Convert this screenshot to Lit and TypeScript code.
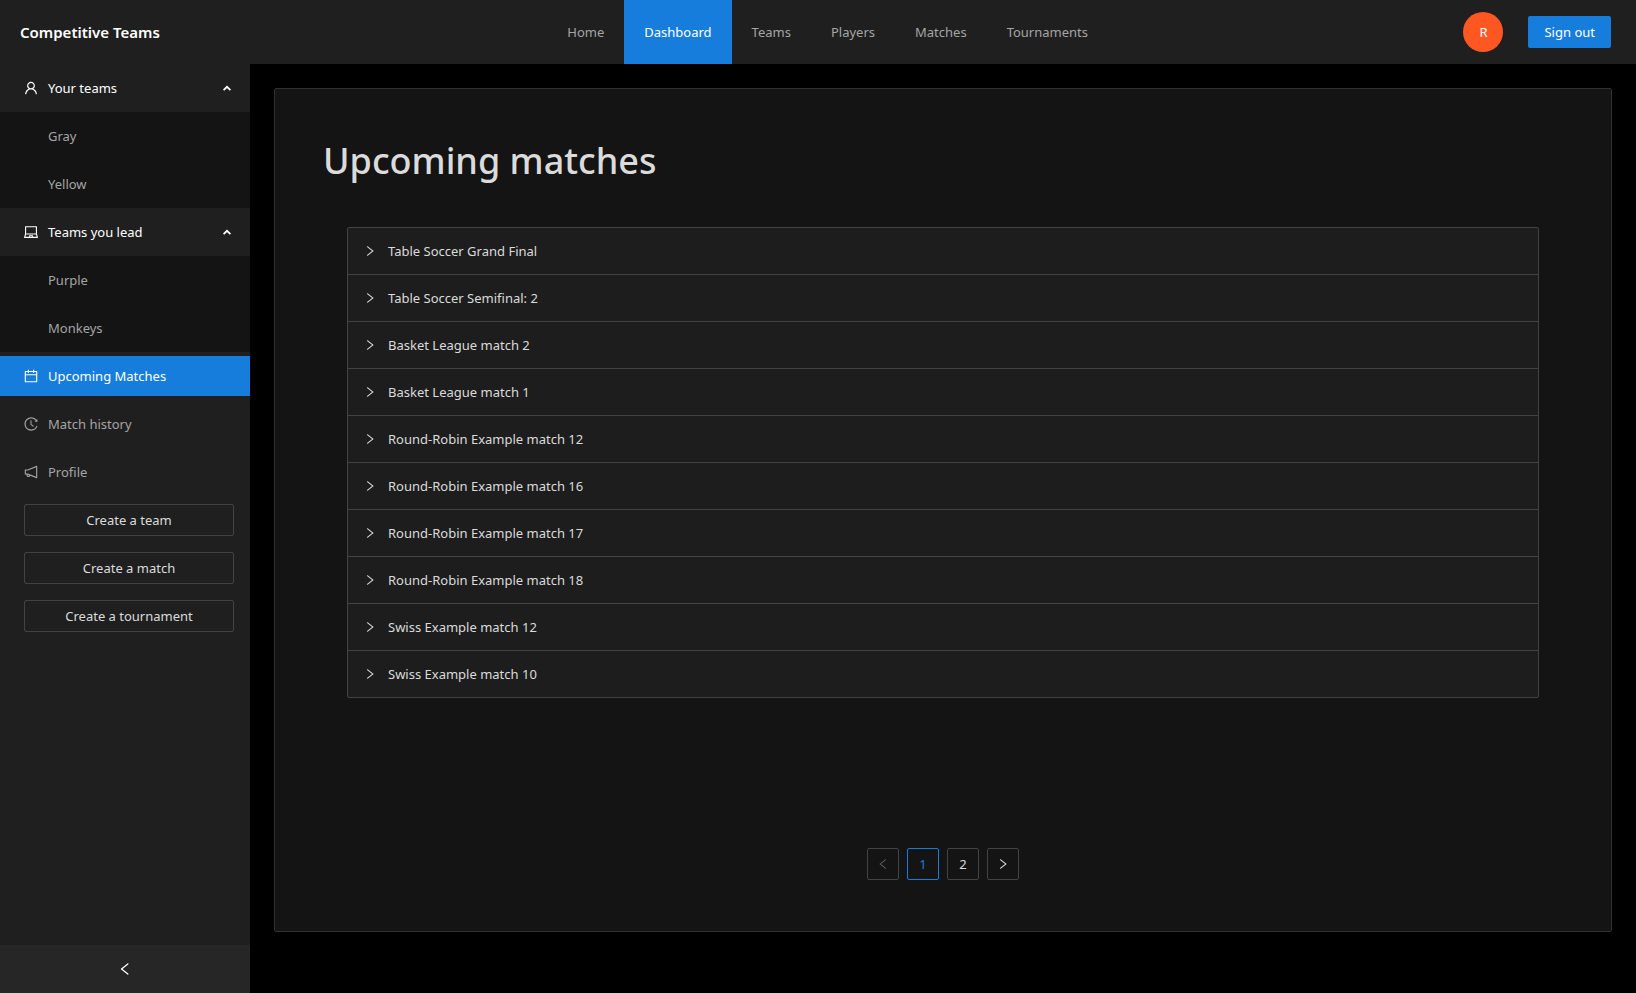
import { LitElement, html, css, svg, nothing } from "lit";
import { customElement, property, state } from "lit/decorators.js";
import { classMap } from "lit/directives/class-map.js";

const ICONS: Record<string, string> = {
  user: "M858.5 763.6a374 374 0 00-80.6-119.5 375.63 375.63 0 00-119.5-80.6c-.4-.2-.8-.3-1.2-.5C719.5 518 760 444.7 760 362c0-137-111-248-248-248S264 225 264 362c0 82.7 40.5 156 102.8 201.1-.4.2-.8.3-1.2.5-44.8 18.9-85 46-119.5 80.6a375.63 375.63 0 00-80.6 119.5A371.7 371.7 0 00136 901.8a8 8 0 008 8.2h60c4.4 0 7.9-3.5 8-7.8 2-77.2 33-149.5 87.8-204.3 56.7-56.7 132-87.9 212.2-87.9s155.5 31.2 212.2 87.9C779 752.7 810 825 812 902.2c.1 4.4 3.6 7.8 8 7.8h60a8 8 0 008-8.2c-1-47.8-10.9-94.3-29.5-138.2zM512 534c-45.9 0-89.1-17.9-121.6-50.4S340 407.9 340 362c0-45.9 17.9-89.1 50.4-121.6S466.1 190 512 190s89.1 17.9 121.6 50.4S684 316.1 684 362c0 45.9-17.9 89.1-50.4 121.6S557.9 534 512 534z",
  laptop: "M956.9 845.1L896.4 632V168c0-17.7-14.3-32-32-32h-704c-17.7 0-32 14.3-32 32v464L67.9 845.1C60.4 866 75.8 888 98 888h828.8c22.2 0 37.6-22 30.1-42.9zM200.4 208h624v395h-624V208zm228.3 608l8.1-37h150.3l8.1 37H428.7zm224 0l-19.1-86.7c-.8-3.7-4.1-6.3-7.8-6.3H398.2c-3.8 0-7 2.6-7.8 6.3L371.3 816H151l42.3-149h638.2l42.3 149H652.7z",
  calendar: "M880 184H712v-64c0-4.4-3.6-8-8-8h-56c-4.4 0-8 3.6-8 8v64H384v-64c0-4.4-3.6-8-8-8h-56c-4.4 0-8 3.6-8 8v64H144c-17.7 0-32 14.3-32 32v664c0 17.7 14.3 32 32 32h736c17.7 0 32-14.3 32-32V216c0-17.7-14.3-32-32-32zm-40 656H184V460h656v380zM184 392V256h128v48c0 4.4 3.6 8 8 8h56c4.4 0 8-3.6 8-8v-48h256v48c0 4.4 3.6 8 8 8h56c4.4 0 8-3.6 8-8v-48h128v136H184z",
  history: "M536.1 273H488c-4.4 0-8 3.6-8 8v275.3c0 2.6 1.2 5 3.3 6.5l165.3 120.7c3.6 2.6 8.6 1.9 11.2-1.7l28.6-39c2.7-3.7 1.9-8.7-1.7-11.2L544.1 528.5V281c0-4.4-3.6-8-8-8zm219.8 75.2l156.8 38.3c5 1.2 9.9-2.6 9.9-7.7l.8-161.5c0-6.7-7.7-10.5-12.9-6.3L752.9 334.1a8 8 0 003 14.1zm167.7 301.1l-56.7-19.5a8 8 0 00-10.1 4.8c-1.9 5.1-3.9 10.1-6 15.1-17.8 42.1-43.3 80-75.9 112.5a353 353 0 01-112.5 75.9 352.18 352.18 0 01-137.7 27.8c-47.8 0-94.1-9.3-137.7-27.8a353 353 0 01-112.5-75.9c-32.5-32.5-58-70.4-75.9-112.5A353.44 353.44 0 01171 512c0-47.8 9.3-94.2 27.8-137.8 17.8-42.1 43.3-80 75.9-112.5a353 353 0 01112.5-75.9C430.6 167.3 477 158 524.8 158s94.1 9.3 137.7 27.8A353 353 0 01775 261.7c10.2 10.3 19.8 21 28.6 32.3l59.8-46.8C784.7 146.6 662.2 81.9 524.6 82 285 82.1 92.6 276.7 95 516.4 97.4 751.9 288.9 942 524.8 942c185.5 0 343.5-117.6 403.7-282.3 1.5-4.2-.7-8.9-4.9-10.4z",
  notification: "M880 112c-3.8 0-7.7.7-11.6 2.3L292 345.9H128c-8.8 0-16 7.4-16 16.6v299c0 9.2 7.2 16.6 16 16.6h101.7c-3.7 11.6-5.7 23.9-5.7 36.4 0 65.9 53.8 119.5 120 119.5 55.4 0 102.1-37.6 115.9-88.4l408.6 164.2c3.9 1.5 7.8 2.3 11.6 2.3 16.9 0 32-14.2 32-33.2V145.2C912 126.2 897 112 880 112zM344 762.3c-26.5 0-48-21.4-48-47.8 0-11.2 3.9-21.9 11-30.4l84.9 34.1c-2 24.6-22.7 44.1-47.9 44.1zm496 58.4L318.8 611.3l-12.9-5.2H184V417.9h121.9l12.9-5.2L840 203.3v617.4z",
  right: "M765.7 486.8L314.9 134.7A7.97 7.97 0 00302 141v77.3c0 4.9 2.3 9.6 6.1 12.6l360 281.1-360 281.1c-3.9 3-6.1 7.7-6.1 12.6V883c0 6.7 7.7 10.4 12.9 6.3l450.8-352.1a31.96 31.96 0 000-50.4z",
  left: "M724 218.3V141c0-6.7-7.7-10.4-12.9-6.3L260.3 486.8a31.86 31.86 0 000 50.3l450.8 352.1c5.3 4.1 12.9.4 12.9-6.3v-77.3c0-4.9-2.3-9.6-6.1-12.6l-360-281 360-281.1c3.8-3 6.1-7.7 6.1-12.6z",
};

const icon = (name: string, size = 14) => html`
  <svg width=${size} height=${size} viewBox="64 64 896 896" fill="currentColor" aria-hidden="true">
    ${svg`<path d=${ICONS[name]}></path>`}
  </svg>
`;

const shared = css`
  *,
  *::before,
  *::after {
    box-sizing: border-box;
  }
  a {
    color: inherit;
    text-decoration: none;
  }
  button {
    font: inherit;
    color: inherit;
    background: transparent;
    border: 0;
    margin: 0;
    padding: 0;
    cursor: pointer;
  }
  ul {
    list-style: none;
    margin: 0;
    padding: 0;
  }
  svg {
    display: block;
    flex: none;
  }
`;

@customElement("top-bar")
class TopBar extends LitElement {
  @state() private current = "Dashboard";

  static styles = [
    shared,
    css`
      :host {
        display: block;
      }
      .bar {
        display: flex;
        justify-content: space-between;
        height: 64px;
        padding: 0 25px 0 20px;
        background: #1f1f1f;
      }
      .brand {
        align-self: center;
        padding-right: 32px;
        font-size: 15px;
        font-weight: 600;
        color: #fff;
      }
      .menu {
        display: flex;
      }
      .link {
        display: flex;
        align-items: center;
        height: 64px;
        padding: 0 20px;
        color: #a5a5a5;
      }
      .link.active {
        background: #177ddc;
        color: #fff;
      }
      .account {
        display: flex;
        align-items: center;
        gap: 25px;
      }
      .avatar {
        display: grid;
        place-items: center;
        width: 40px;
        height: 40px;
        border-radius: 50%;
        background: #ff5722;
        color: #fff;
      }
      .signout {
        height: 32px;
        padding: 0 16px;
        border-radius: 2px;
        background: #177ddc;
        color: #fff;
      }
    `,
  ];

  render() {
    const links = ["Home", "Dashboard", "Teams", "Players", "Matches", "Tournaments"];
    return html`
      <header class="bar">
        <a class="brand" href="#">Competitive Teams</a>
        <nav aria-label="Main">
          <ul class="menu">
            ${links.map(
              (l) => html`<li>
                <a
                  href="#${l.toLowerCase()}"
                  class=${classMap({ link: true, active: l === this.current })}
                  @click=${() => (this.current = l)}
                  >${l}</a
                >
              </li>`
            )}
          </ul>
        </nav>
        <div class="account">
          <span class="avatar">R</span>
          <button class="signout" type="button">Sign out</button>
        </div>
      </header>
    `;
  }
}

@customElement("side-menu")
class SideMenu extends LitElement {
  @state() private closed: string[] = [];

  static styles = [
    shared,
    css`
      :host {
        display: flex;
        flex-direction: column;
        background: #1f1f1f;
        color: #a5a5a5;
      }
      .group {
        display: flex;
        align-items: center;
        gap: 10px;
        width: 100%;
        height: 48px;
        padding: 0 16px 0 24px;
        color: #fff;
      }
      .caret {
        margin-left: auto;
      }
      .caret.closed {
        transform: rotate(180deg);
      }
      .sub {
        background: #141414;
      }
      .subitem {
        display: flex;
        align-items: center;
        height: 48px;
        padding: 0 16px 0 48px;
      }
      .pages {
        display: grid;
        gap: 8px;
        padding: 4px 0;
      }
      .item {
        display: flex;
        align-items: center;
        gap: 10px;
        height: 40px;
        padding: 0 16px 0 24px;
      }
      .item.active {
        background: #177ddc;
        color: #fff;
      }
      .actions {
        display: grid;
        gap: 16px;
        padding: 8px 16px 16px 24px;
      }
      .create {
        height: 32px;
        border: 1px solid #434343;
        border-radius: 2px;
        color: #dbdbdb;
      }
      .collapse {
        display: grid;
        place-items: center;
        height: 48px;
        margin-top: auto;
        background: #262626;
        color: #fff;
      }
    `,
  ];

  private toggle(name: string) {
    this.closed = this.closed.includes(name)
      ? this.closed.filter((n) => n !== name)
      : [...this.closed, name];
  }

  private group(name: string, glyph: string, teams: string[]) {
    const closed = this.closed.includes(name);
    return html`
      <li>
        <button class="group" type="button" aria-expanded=${!closed} @click=${() => this.toggle(name)}>
          ${icon(glyph)}<span>${name}</span>
          <svg class=${classMap({ caret: true, closed })} width="14" height="14" viewBox="0 0 14 14" aria-hidden="true">
            <path d="M3.6 9.2 7 5.8l3.4 3.4" fill="none" stroke="currentColor" stroke-width="1.7"></path>
          </svg>
        </button>
        ${closed
          ? nothing
          : html`<ul class="sub">
              ${teams.map((t) => html`<li><a class="subitem" href="#team">${t}</a></li>`)}
            </ul>`}
      </li>
    `;
  }

  render() {
    return html`
      <ul>
        ${this.group("Your teams", "user", ["Gray", "Yellow"])}
        ${this.group("Teams you lead", "laptop", ["Purple", "Monkeys"])}
      </ul>
      <ul class="pages">
        <li><a class="item active" href="#upcoming">${icon("calendar")}Upcoming Matches</a></li>
        <li><a class="item" href="#history">${icon("history")}Match history</a></li>
        <li><a class="item" href="#profile">${icon("notification")}Profile</a></li>
      </ul>
      <div class="actions">
        <button class="create" type="button">Create a team</button>
        <button class="create" type="button">Create a match</button>
        <button class="create" type="button">Create a tournament</button>
      </div>
      <button class="collapse" type="button" aria-label="Collapse menu">${icon("left", 14)}</button>
    `;
  }
}

@customElement("match-list")
class MatchList extends LitElement {
  @property({ attribute: false }) matches: string[] = [];

  static styles = [
    shared,
    css`
      :host {
        display: block;
      }
      .list {
        border: 1px solid #434343;
        border-radius: 2px;
        background: #1d1d1d;
      }
      .list li + li {
        border-top: 1px solid #434343;
      }
      .row {
        display: flex;
        align-items: center;
        gap: 12px;
        width: 100%;
        height: 46px;
        padding: 0 16px;
        color: #dbdbdb;
      }
    `,
  ];

  render() {
    return html`
      <ul class="list">
        ${this.matches.map(
          (m) => html`<li>
            <button class="row" type="button" aria-expanded="false">${icon("right", 12)}<span>${m}</span></button>
          </li>`
        )}
      </ul>
    `;
  }
}

@customElement("page-picker")
class PagePicker extends LitElement {
  @state() private page = 1;

  static styles = [
    shared,
    css`
      :host {
        display: flex;
        justify-content: center;
        gap: 8px;
      }
      .page {
        display: grid;
        place-items: center;
        width: 32px;
        height: 32px;
        border: 1px solid #434343;
        border-radius: 2px;
        color: #dbdbdb;
      }
      .page:disabled {
        color: #5a5a5a;
        cursor: not-allowed;
      }
      .page.active {
        border-color: #177ddc;
        color: #177ddc;
      }
    `,
  ];

  render() {
    return html`
      <button class="page" type="button" aria-label="Previous page" ?disabled=${this.page === 1} @click=${() => this.page--}>
        ${icon("left", 12)}
      </button>
      ${[1, 2].map(
        (n) => html`<button
          type="button"
          class=${classMap({ page: true, active: n === this.page })}
          @click=${() => (this.page = n)}
        >
          ${n}
        </button>`
      )}
      <button class="page" type="button" aria-label="Next page" ?disabled=${this.page === 2} @click=${() => this.page++}>
        ${icon("right", 12)}
      </button>
    `;
  }
}

@customElement("app-root")
class AppRoot extends LitElement {
  private matches = [
    "Table Soccer Grand Final",
    "Table Soccer Semifinal: 2",
    "Basket League match 2",
    "Basket League match 1",
    "Round-Robin Example match 12",
    "Round-Robin Example match 16",
    "Round-Robin Example match 17",
    "Round-Robin Example match 18",
    "Swiss Example match 12",
    "Swiss Example match 10",
  ];

  static styles = [
    shared,
    css`
      :host {
        display: flex;
        flex-direction: column;
        min-height: 100vh;
        background: #000;
        color: #dbdbdb;
        font: 13px/22px "Noto Sans", sans-serif;
      }
      .body {
        display: grid;
        grid-template-columns: 250px 1fr;
        flex: 1;
      }
      .main {
        display: flex;
        padding: 24px 24px 61px;
      }
      .card {
        display: flex;
        flex: 1;
        flex-direction: column;
        padding: 48px;
        border: 1px solid #303030;
        border-radius: 2px;
        background: #141414;
      }
      .title {
        margin: 0;
        font-size: 36px;
        line-height: 48px;
        font-weight: 500;
      }
      .matches {
        margin: 42px 24px 48px;
      }
      .pager {
        margin: auto 0 3px;
      }
    `,
  ];

  render() {
    return html`
      <top-bar></top-bar>
      <div class="body">
        <side-menu></side-menu>
        <main class="main">
          <section class="card">
            <h1 class="title">Upcoming matches</h1>
            <match-list class="matches" .matches=${this.matches}></match-list>
            <page-picker class="pager"></page-picker>
          </section>
        </main>
      </div>
    `;
  }
}
